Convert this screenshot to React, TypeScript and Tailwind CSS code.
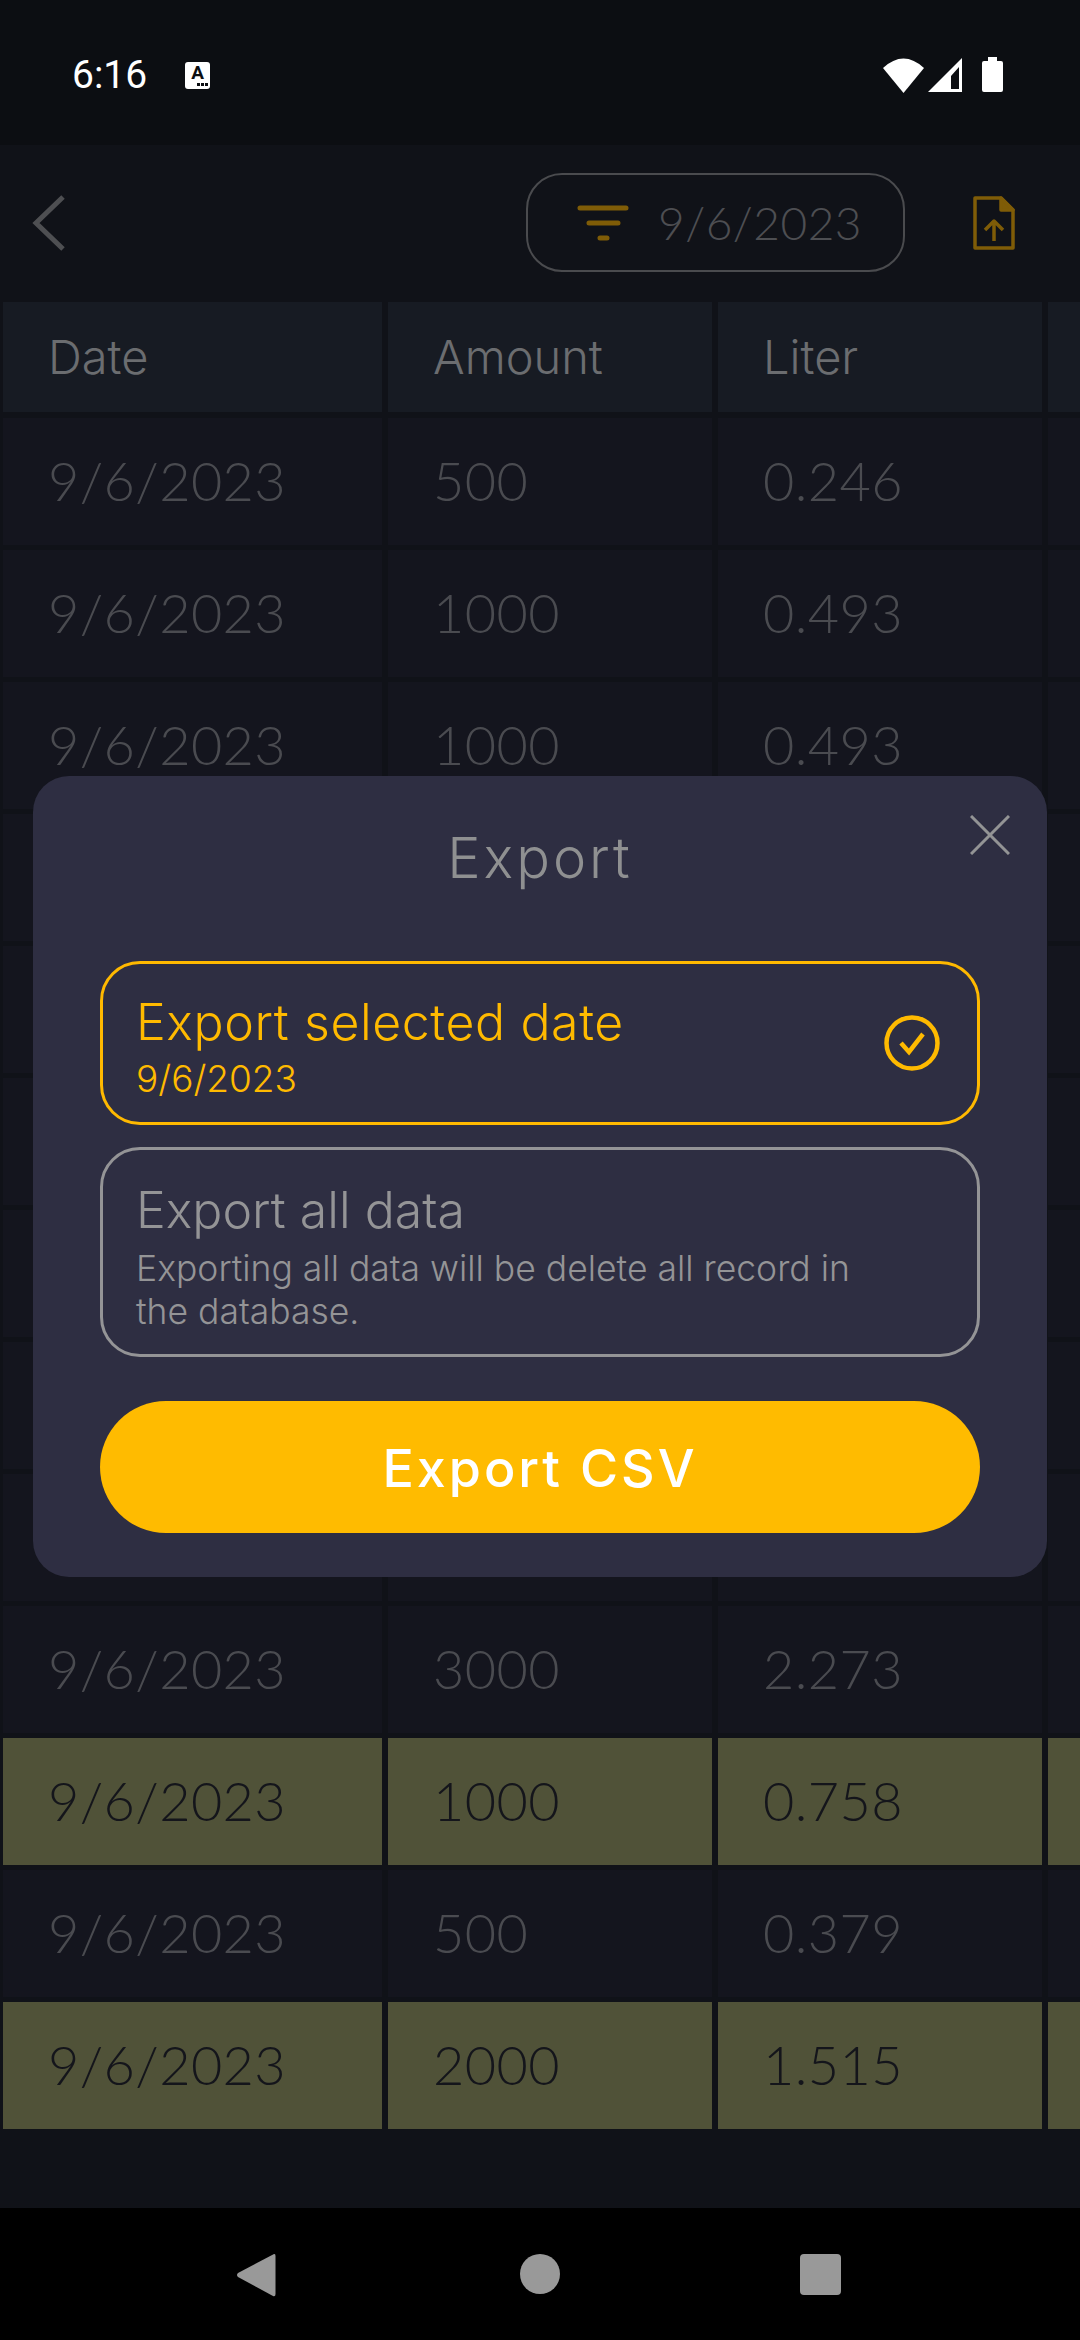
const rows: { date: string; amount: string; liter: string; hl?: boolean }[] = [
  { date: "9/6/2023", amount: "500", liter: "0.246" },
  { date: "9/6/2023", amount: "1000", liter: "0.493" },
  { date: "9/6/2023", amount: "1000", liter: "0.493" },
  // these six sit behind the dialog
  { date: "", amount: "", liter: "" },
  { date: "", amount: "", liter: "" },
  { date: "", amount: "", liter: "" },
  { date: "", amount: "", liter: "" },
  { date: "", amount: "", liter: "" },
  { date: "", amount: "", liter: "" },
  { date: "9/6/2023", amount: "3000", liter: "2.273" },
  { date: "9/6/2023", amount: "1000", liter: "0.758", hl: true },
  { date: "9/6/2023", amount: "500", liter: "0.379" },
  { date: "9/6/2023", amount: "2000", liter: "1.515", hl: true },
];

function StatusBar() {
  return (
    <div className="h-[145px] shrink-0 bg-[#0c0e12] flex items-start justify-between pl-[72px] pr-[77px] pt-[57px]">
      <div className="flex items-center gap-[38px]">
        <span className="font-[Roboto,sans-serif] text-[39px] leading-[36px] text-white">6:16</span>
        <div className="w-[25px] h-[27px] rounded-[3px] bg-white relative flex justify-center">
          <span className="font-[Roboto,sans-serif] font-bold text-[19px] leading-[22px] text-[#0c0e12]">A</span>
          <div className="absolute right-[2px] bottom-[3px] flex gap-[1px]">
            <div className="w-[3px] h-[3px] bg-[#0c0e12]" />
            <div className="w-[3px] h-[3px] bg-[#0c0e12]" />
            <div className="w-[3px] h-[3px] bg-[#0c0e12]" />
          </div>
        </div>
      </div>
      <svg width="120" height="36" viewBox="883 57 120 36" fill="white">
        <path d="M883 68 Q903.5 49 924 68 L903.5 93 Z" />
        <path fillRule="evenodd" d="M962 58 V92 H928 Z M959 67 L951 76 V89 H959 Z" />
        <path d="M988 57 H997 V61 H1001 Q1003 61 1003 63 V90 Q1003 92 1001 92 H984 Q982 92 982 90 V63 Q982 61 984 61 H988 Z" />
      </svg>
    </div>
  );
}

function Header() {
  return (
    <div className="h-[157px] shrink-0 flex items-center pl-[32px] pr-[65px]">
      <svg className="-mt-[2px]" width="34" height="56" viewBox="0 0 34 56" fill="none" stroke="#4e4f52" strokeWidth="5">
        <path d="M31 2 L4 28 L31 54" />
      </svg>
      <div className="ml-auto w-[379px] h-[99px] rounded-[36px] border-[2.5px] border-[#4a4b4e] flex items-center pl-[49px] gap-[29px] -mt-[2px]">
        <svg width="52" height="36" viewBox="0 0 52 36" fill="none" stroke="#7f5c07" strokeWidth="5" strokeLinecap="round">
          <path d="M3 3 H49 M12 18 H41 M23 33 H30" />
        </svg>
        <span className="font-[Lato,sans-serif] font-light text-[46px] leading-none tracking-[0.5px] text-[#4d4e52]">9/6/2023</span>
      </div>
      <svg className="ml-[68px] -mt-[2px]" width="42" height="54" viewBox="0 0 42 54" fill="none" stroke="#7f5c07" strokeWidth="3.5" strokeLinejoin="round">
        <path d="M2 2 H28 L40 14 V52 H2 Z" />
        <path d="M28 2 L40 14 H28 Z" fill="#7f5c07" />
        <path d="M21 45 V26 M12 34 L21 25 L30 34" />
      </svg>
    </div>
  );
}

function Cell({ w, text, hl, head }: { w: string; text: string; hl?: boolean; head?: boolean }) {
  return (
    <div
      className={`${w} shrink-0 flex items-center pl-[45px] font-light ${
        head
          ? "bg-[#171b23] font-[Inter,sans-serif] text-[47px] text-[#6b6d70]"
          : hl
            ? "bg-[#505238] pb-[2px] font-[Lato,sans-serif] text-[54px] tracking-[0.4px] text-[#14151b]"
            : "bg-[#14151e] pb-[2px] font-[Lato,sans-serif] text-[54px] tracking-[0.4px] text-[#4a4b50]"
      }`}
    >
      {text}
    </div>
  );
}

function Row({ a, b, c, hl, head }: { a: string; b: string; c: string; hl?: boolean; head?: boolean }) {
  return (
    <div className={`flex gap-[6px] pl-[3px] ${head ? "h-[110px]" : "h-[127px]"}`}>
      <Cell w="w-[379px]" text={a} hl={hl} head={head} />
      <Cell w="w-[324px]" text={b} hl={hl} head={head} />
      <Cell w="w-[324px]" text={c} hl={hl} head={head} />
      <Cell w="w-[324px]" text="" hl={hl} head={head} />
    </div>
  );
}

function Table() {
  return (
    <div className="flex flex-col gap-[5px] overflow-hidden">
      <div className="mb-[1px]">
        <Row a="Date" b="Amount" c="Liter" head />
      </div>
      {rows.map((r, i) => (
        <Row key={i} a={r.date} b={r.amount} c={r.liter} hl={r.hl} />
      ))}
    </div>
  );
}

function NavBar() {
  return (
    <div className="mt-auto h-[132px] shrink-0 bg-black flex items-start pt-[45px] pl-[236px]">
      <svg width="40" height="44" viewBox="0 0 40 44" fill="#999999">
        <path d="M38 1 Q39.5 0.5 39.5 3 V41 Q39.5 44 37 43 L2 24 Q0 22 2 20 Z" />
      </svg>
      <div className="w-[40px] h-[40px] rounded-full bg-[#999999] ml-[244px] mt-[1px]" />
      <div className="w-[41px] h-[41px] rounded-[4px] bg-[#999999] ml-[240px] mt-[1px]" />
    </div>
  );
}

function ExportDialog() {
  return (
    <div className="absolute left-[33px] top-[776px] w-[1014px] h-[801px] rounded-[36px] bg-[#2e2e42] px-[67px] pt-[50px] font-[Inter,sans-serif]">
      <div className="text-center font-light text-[56px] leading-[65px] tracking-[3px] text-[#8f9091]">Export</div>
      <svg className="absolute left-[937px] top-[39px]" width="40" height="40" viewBox="0 0 40 40" fill="none" stroke="#939495" strokeWidth="3">
        <path d="M1 1 L39 39 M39 1 L1 39" />
      </svg>

      <div className="mt-[70px] h-[164px] rounded-[40px] border-[3px] border-[#ffb900] flex items-center justify-between pl-[33px] pr-[37px]">
        <div className="flex flex-col pt-[10px]">
          <span className="font-light text-[50px] leading-[58px] tracking-[0.6px] text-[#ffba00]">Export selected date</span>
          <span className="mt-[3px] font-light text-[37px] leading-[50px] text-[#ffba00]">9/6/2023</span>
        </div>
        <svg width="56" height="56" viewBox="0 0 56 56" fill="none" stroke="#ffba00" strokeWidth="4.5">
          <circle cx="28" cy="28" r="25.5" />
          <path d="M17 28 L25 37 L39 19" />
        </svg>
      </div>

      <div className="mt-[22px] h-[210px] rounded-[40px] border-[3px] border-[#949496] flex flex-col justify-center pt-[10px] pl-[33px] pr-[100px]">
        <span className="font-light text-[50px] leading-[58px] text-[#949496]">Export all data</span>
        <span className="mt-[8px] font-light text-[35.5px] leading-[43px] text-[#949496]">
          Exporting all data will be delete all record in the database.
        </span>
      </div>

      <div className="mt-[44px] h-[132px] rounded-full bg-[#ffbb00] flex items-center justify-center pt-[3px]">
        <span className="font-medium text-[52px] tracking-[3px] text-white">Export CSV</span>
      </div>
    </div>
  );
}

export default function App() {
  return (
    <div className="relative w-[1080px] h-[2340px] overflow-hidden bg-[#101218] flex flex-col">
      <StatusBar />
      <Header />
      <Table />
      <NavBar />
      <ExportDialog />
    </div>
  );
}
